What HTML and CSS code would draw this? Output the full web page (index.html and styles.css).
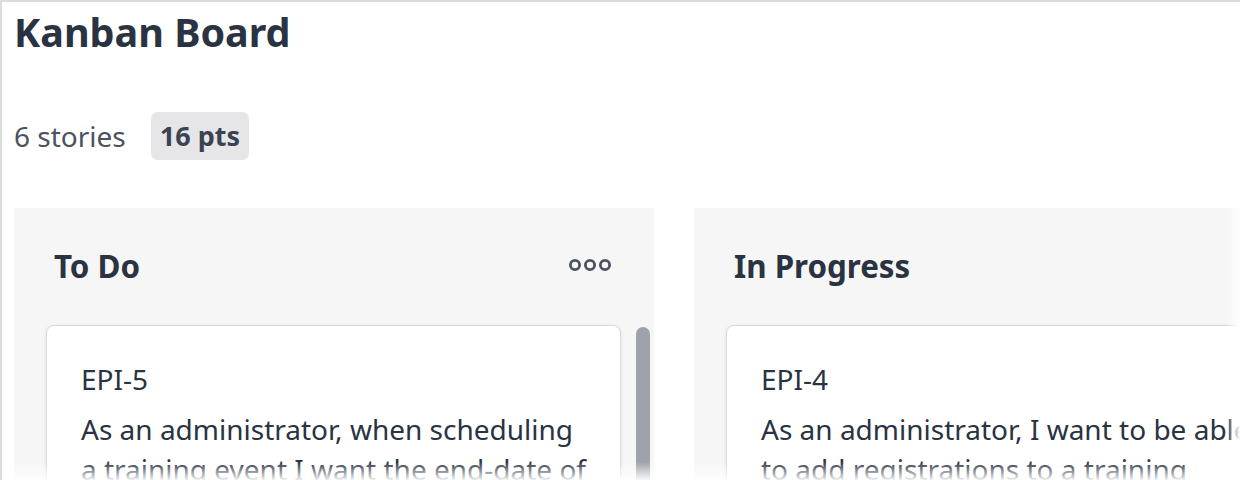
FILE: index.html
```html
<!DOCTYPE html>
<html lang="en">
<head>
<meta charset="utf-8">
<title>Kanban Board</title>
<link rel="stylesheet" href="styles.css">
</head>
<body>
<div class="frame">
  <h1 class="title">Kanban Board</h1>
  <div class="stats">
    <span class="count">6 stories</span>
    <span class="points">16 pts</span>
  </div>
  <div class="board">
    <section class="column">
      <header class="col-head">
        <h2 class="col-title">To Do</h2>
        <svg class="more" width="44" height="14" viewBox="0 0 44 14" aria-hidden="true">
          <circle cx="6" cy="7" r="4.6" fill="none" stroke="#4b5260" stroke-width="2.8"/>
          <circle cx="21" cy="7" r="4.6" fill="none" stroke="#4b5260" stroke-width="2.8"/>
          <circle cx="36" cy="7" r="4.6" fill="none" stroke="#4b5260" stroke-width="2.8"/>
        </svg>
      </header>
      <div class="col-body">
        <div class="cards">
          <article class="card">
            <div class="card-key">EPI-5</div>
            <p class="card-text">As an administrator, when scheduling a training event I want the end-date of the event to default to the start-date.</p>
          </article>
        </div>
        <div class="scrollbar"></div>
      </div>
    </section>
    <section class="column">
      <header class="col-head">
        <h2 class="col-title">In Progress</h2>
        <svg class="more" width="44" height="14" viewBox="0 0 44 14" aria-hidden="true">
          <circle cx="6" cy="7" r="4.6" fill="none" stroke="#4b5260" stroke-width="2.8"/>
          <circle cx="21" cy="7" r="4.6" fill="none" stroke="#4b5260" stroke-width="2.8"/>
          <circle cx="36" cy="7" r="4.6" fill="none" stroke="#4b5260" stroke-width="2.8"/>
        </svg>
      </header>
      <div class="col-body">
        <div class="cards">
          <article class="card">
            <div class="card-key">EPI-4</div>
            <p class="card-text">As an administrator, I want to be able to add registrations to a training event.</p>
          </article>
        </div>
        <div class="scrollbar"></div>
      </div>
    </section>
  </div>
  <div class="fade-right"></div>
  <div class="fade-bottom"></div>
</div>
</body>
</html>
```

FILE: styles.css
```css
html, body {
  margin: 0;
  padding: 0;
  background: #ffffff;
}

body {
  width: 1240px;
  height: 480px;
  overflow: hidden;
  font-family: "Noto Sans", "Open Sans", sans-serif;
  color: #2a3342;
}

.frame {
  position: relative;
  box-sizing: border-box;
  height: 480px;
  border-left: 2px solid #dcdcdc;
  border-top: 2px solid #dcdcdc;
  padding: 3px 0 0 12px;
  overflow: hidden;
}

.title {
  margin: 0;
  font-size: 39.5px;
  line-height: 54px;
  font-weight: 700;
  color: #2a3342;
}

.stats {
  display: flex;
  align-items: center;
  gap: 25px;
  margin-top: 53px;
  font-size: 28px;
  line-height: 40px;
}

.count {
  color: #4a5261;
}

.points {
  background: #e6e6e8;
  border-radius: 7px;
  padding: 4px 9px;
  font-size: 27px;
  font-weight: 700;
  color: #3b4351;
}

.board {
  display: flex;
  gap: 40px;
  margin-top: 48px;
}

.column {
  flex: 0 0 640px;
  box-sizing: border-box;
  background: #f6f6f6;
  padding: 36px 4px 0 32px;
  height: 300px;
}

.col-head {
  display: flex;
  align-items: center;
  justify-content: space-between;
  padding: 0 37px 0 8px;
  margin-bottom: 37px;
}

.col-title {
  margin: 0;
  font-size: 31.3px;
  line-height: 44px;
  font-weight: 700;
  color: #2a3342;
}

.more {
  display: block;
  margin-top: -3px;
}

.col-body {
  display: flex;
  align-items: flex-start;
}

.cards {
  flex: 1;
}

.card {
  background: #ffffff;
  border: 1px solid #dadada;
  border-radius: 8px;
  box-shadow: 0 1px 4px rgba(0, 0, 0, 0.08);
  padding: 33px 34px;
  font-size: 28px;
  line-height: 40px;
  color: #2a3342;
}

.card-key {
  color: #2a3342;
}

.card-text {
  margin: 10px 0 0;
}

.scrollbar {
  flex: 0 0 14px;
  height: 220px;
  margin: 2px 0 0 15px;
  background: #9ea2a9;
  border-radius: 7px;
}

.fade-right {
  position: absolute;
  top: 0;
  right: 0;
  width: 14px;
  height: 100%;
  background: linear-gradient(to right, rgba(255, 255, 255, 0), #ffffff);
}

.fade-bottom {
  position: absolute;
  left: 0;
  right: 0;
  bottom: 0;
  height: 18px;
  background: linear-gradient(to bottom, rgba(255, 255, 255, 0), rgba(255, 255, 255, 0.92));
}
```
